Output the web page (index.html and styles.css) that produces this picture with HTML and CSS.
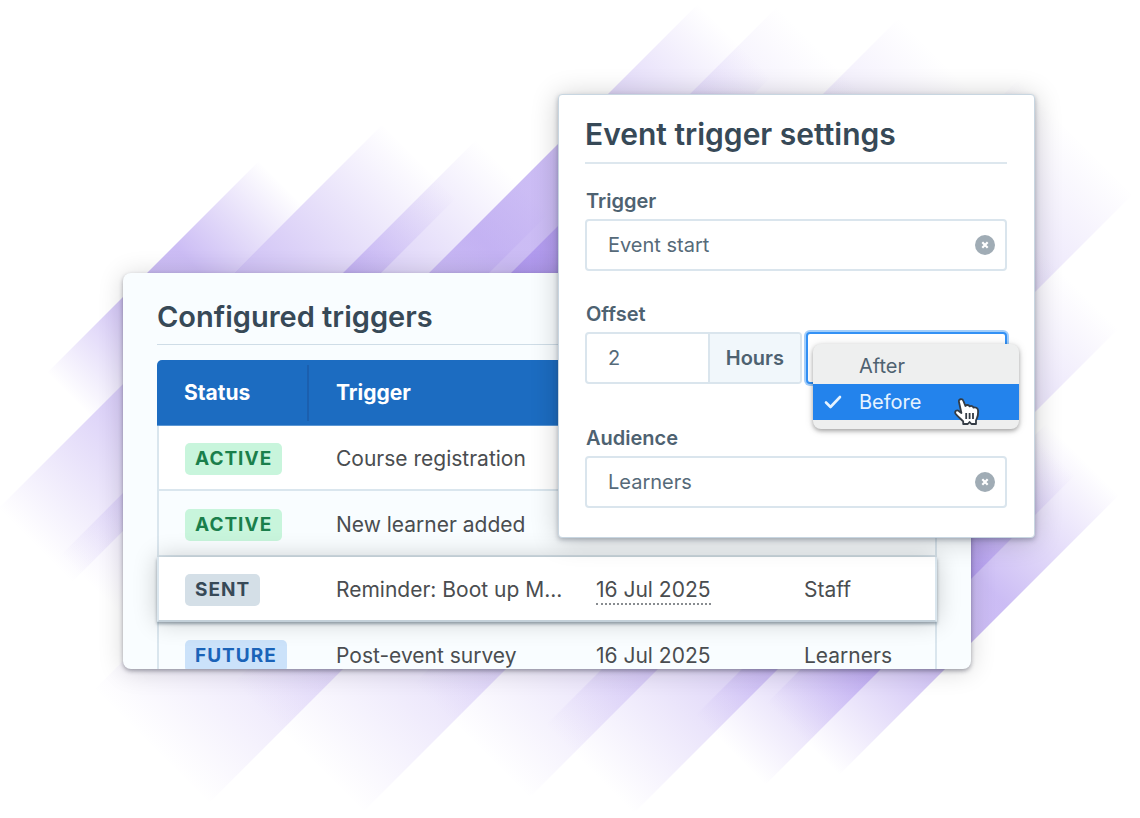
FILE: index.html
```html
<!DOCTYPE html>
<html lang="en">
<head>
    <meta charset="UTF-8">
    <title>Event triggers</title>
    <link rel="stylesheet" href="styles.css">
</head>
<body>
<div id="scene">
    <svg class="beams" viewBox="0 0 1140 818" aria-hidden="true">
        <defs>
            <linearGradient id="fade">
                <stop offset="0" stop-color="#8f6ee8" stop-opacity="0"/>
                <stop offset="0.4" stop-color="#8f6ee8" stop-opacity="0.46"/>
                <stop offset="0.6" stop-color="#8f6ee8" stop-opacity="0.46"/>
                <stop offset="1" stop-color="#8f6ee8" stop-opacity="0"/>
            </linearGradient>
        </defs>
        <!-- x runs along the beams, y across them -->
        <g transform="matrix(.5 -.5 .5 .5 0 0)" fill="url(#fade)">
            <rect x="-326" y="420" width="424" height="87"/>
            <rect x="-510" y="507" width="769" height="147"/>
            <rect x="-494" y="616" width="830" height="146"/>
            <rect x="-60" y="702" width="754" height="146"/>
            <rect x="-596" y="784" width="1367" height="228"/>
            <rect x="-450" y="917" width="1331" height="258"/>
            <rect x="-270" y="1098" width="1210" height="229"/>
            <rect x="-180" y="1271" width="970" height="176"/>
            <rect x="-20" y="1411" width="620" height="139"/>
            <rect x="64" y="1470" width="560" height="144"/>
        </g>
    </svg>

    <section class="panel">
        <h2>Configured triggers</h2>
        <table>
            <colgroup>
                <col class="col-status">
                <col class="col-trigger">
                <col class="col-date">
                <col>
            </colgroup>
            <thead>
            <tr>
                <th>Status</th>
                <th>Trigger</th>
                <th></th>
                <th></th>
            </tr>
            </thead>
            <tbody>
            <tr>
                <td><span class="badge active">ACTIVE</span></td>
                <td>Course registration</td>
                <td></td>
                <td></td>
            </tr>
            <tr>
                <td><span class="badge active">ACTIVE</span></td>
                <td>New learner added</td>
                <td></td>
                <td></td>
            </tr>
            <tr class="raised">
                <td><span class="badge sent">SENT</span></td>
                <td>Reminder: Boot up M...</td>
                <td><span class="dotted">16 Jul 2025</span></td>
                <td>Staff</td>
            </tr>
            <tr>
                <td><span class="badge future">FUTURE</span></td>
                <td>Post-event survey</td>
                <td>16 Jul 2025</td>
                <td>Learners</td>
            </tr>
            </tbody>
        </table>
    </section>

    <form class="dialog">
        <h2>Event trigger settings</h2>

        <label for="trigger">Trigger</label>
        <div class="field">
            <input type="text" id="trigger" value="Event start">
            <button type="button" class="clear" aria-label="Clear trigger">
                <svg viewBox="0 0 20 20"><path d="M7.3 7.3l5.4 5.4M12.7 7.3l-5.4 5.4"/></svg>
            </button>
        </div>

        <label for="offset">Offset</label>
        <div class="offset-row">
            <div class="field">
                <input type="text" id="offset" value="2">
                <span class="unit">Hours</span>
            </div>
            <div class="direction">
                <select aria-label="Before or after">
                    <option>After</option>
                    <option selected>Before</option>
                </select>
                <ul class="menu">
                    <li>After</li>
                    <li class="selected">
                        <svg class="tick" viewBox="0 0 18 14"><path d="M2 7.5l4.5 4.5L16 2"/></svg>
                        Before
                        <svg class="hand" viewBox="0 0 26 28"><path d="M5 4C4.200 .8 8.400 .2 9.400 3L11.400 8C12.400 6.400 14.800 6.800 15.600 8.400C17 7.400 19 8 19.400 9.600C21.400 8.800 23.800 10 24 12.200C24.200 15 24.200 17.500 23 20L22 22.400V26H17.400L15.600 24L13.800 26H9.200V23.400C7 21 3.600 18.600 1.600 15.800C.2 13.200 3 11.400 5 13.200L7.400 15Z"/><path d="M12.200 15v6M15.600 15v6M19 15v6"/></svg>
                    </li>
                </ul>
            </div>
        </div>

        <label for="audience">Audience</label>
        <div class="field">
            <input type="text" id="audience" value="Learners">
            <button type="button" class="clear" aria-label="Clear audience">
                <svg viewBox="0 0 20 20"><path d="M7.3 7.3l5.4 5.4M12.7 7.3l-5.4 5.4"/></svg>
            </button>
        </div>
    </form>
</div>
</body>
</html>
```
FILE: styles.css
```css
* {
    margin: 0;
    padding: 0;
    box-sizing: border-box;
}

body {
    background: #fff;
    color: #4a4d50;
    font: 20px/24px Inter, "Liberation Sans", sans-serif;
}

ul {
    list-style: none;
}

#scene {
    position: relative;
    display: grid;
    grid-template-columns: 123fr 435fr 413fr 64fr 105fr;
    align-items: start;
    min-height: 100vh;
    padding-top: 94px;
    overflow: hidden;
}

.beams {
    position: absolute;
    top: 0;
    left: 0;
    width: 100%;
}

h2 {
    color: #374957;
    font-size: 29px;
    font-weight: 600;
    line-height: 36px;
}

/* triggers table */
.panel {
    position: relative;
    grid-area: 1 / 2 / 2 / 4;
    height: 396px;
    margin-top: 179px;
    padding: 26px 34px 0;
    overflow: hidden;
    background: #f9fdff;
    border-radius: 8px;
    box-shadow: 0 2px 4px rgba(40, 40, 60, .4), 0 2px 26px rgba(0, 0, 0, .16);
}

.panel h2 {
    padding-bottom: 9px;
    border-bottom: 1px solid #cfdde7;
    margin-bottom: 15px;
}

table {
    width: 100%;
    table-layout: fixed;
    border-spacing: 0;
    font-size: 21px;
}

.col-status {
    width: 152px;
}

.col-trigger {
    width: 260px;
}

.col-date {
    width: 208px;
}

th {
    height: 66px;
    padding-left: 27px;
    background: #1c6cc1;
    border-bottom: 1px solid #5c97d4;
    color: #fff;
    font-weight: 700;
    text-align: left;
}

th:first-child {
    border-radius: 5px 0 0 0;
    background: linear-gradient(#1b5fae, #1b5fae) right center / 2px 56px no-repeat #1c6cc1;
}

th:last-child {
    border-radius: 0 5px 0 0;
}

td {
    height: 66px;
    padding: 3px 0 0 27px;
    background: #f9fdff;
    border-bottom: 2px solid #dae6ee;
    white-space: nowrap;
}

tr:first-child td,
.raised td {
    background: #fff;
}

tr:first-child td {
    height: 65px;
}

.raised td {
    height: 65px;
    border-bottom-color: #c3d0d9;
}

td:first-child {
    border-left: 2px solid #dae6ee;
    padding-left: 26px;
}

td:last-child {
    border-right: 2px solid #dae6ee;
}

.raised {
    position: relative;
    box-shadow: 0 2px 3px rgba(60, 80, 95, .5), 0 0 24px rgba(0, 0, 0, .2);
}

.badge {
    display: inline-block;
    padding: 0 10px;
    border-radius: 5px;
    font-size: 19px;
    font-weight: 700;
    line-height: 32px;
    letter-spacing: 1px;
}

.active {
    background: #c8f5dc;
    color: #1a7f4b;
}

.sent {
    background: #d4dfe7;
    color: #374957;
}

.future {
    background: #cbe2fa;
    color: #1a63b8;
}

.dotted {
    padding-bottom: 1px;
    border-bottom: 2px dotted #888c90;
}

/* settings dialog */
.dialog {
    position: relative;
    grid-area: 1 / 3 / 2 / 5;
    padding: 21px 27px 29px 26px;
    background: #fff;
    border: 1px solid #c8d6e1;
    border-radius: 4px;
    box-shadow: 0 2px 5px rgba(50, 60, 80, .35), 0 2px 28px rgba(0, 0, 0, .2);
    color: #4e6271;
}

.dialog h2 {
    padding-bottom: 10px;
    border-bottom: 2px solid #dde7ee;
    margin-bottom: 25px;
    font-size: 30px;
}

label {
    display: block;
    height: 30px;
    padding-left: 1px;
    font-weight: 600;
}

.field {
    display: flex;
    align-items: center;
    height: 52px;
    margin-bottom: 31px;
    overflow: hidden;
    background: #fff;
    border: 2px solid #dae5ed;
    border-radius: 4px;
}

.field:last-child {
    margin-bottom: 0;
}

input {
    flex: 1;
    min-width: 0;
    padding-left: 21px;
    border: 0;
    outline: 0;
    background: none;
    color: #566a79;
    font: inherit;
}

.clear {
    width: 20px;
    height: 20px;
    margin-right: 10px;
    border: 0;
    border-radius: 50%;
    background: #a0acb5;
}

.clear svg {
    display: block;
    fill: none;
    stroke: #fff;
    stroke-width: 2.2;
}

.offset-row {
    display: flex;
    gap: 4px;
    margin-bottom: 42px;
}

.offset-row .field {
    flex: 1;
    margin: 0;
}

.unit {
    padding: 0 16px;
    background: #f1f7fb;
    border-left: 2px solid #dae5ed;
    font-weight: 600;
    line-height: 48px;
}

.direction {
    position: relative;
    width: 201px;
}

select {
    width: 100%;
    height: 52px;
    padding-left: 22px;
    appearance: none;
    background: #fff;
    border: 2px solid #3391f5;
    border-radius: 4px;
    box-shadow: 0 0 0 2px #a3cefa;
    color: #566a79;
    font: inherit;
}

.menu {
    position: absolute;
    top: 12px;
    left: 7px;
    width: 206px;
    padding: 4px 0 9px;
    background: #eeefef;
    border-radius: 8px;
    box-shadow: 0 2px 4px rgba(0, 0, 0, .3), 0 1px 10px rgba(0, 0, 0, .12);
}

.menu li {
    padding-left: 46px;
    line-height: 36px;
}

.menu .selected {
    position: relative;
    background: #2383ec;
    color: #e6f3ff;
}

.tick {
    position: absolute;
    top: 11px;
    left: 11px;
    width: 18px;
    fill: none;
    stroke: #e6f3ff;
    stroke-width: 2.6;
    stroke-linecap: round;
    stroke-linejoin: round;
}

.hand {
    position: absolute;
    top: 14px;
    right: 39px;
    width: 26px;
    fill: #fff;
    stroke: #333b44;
    stroke-width: 1.8;
    stroke-linejoin: round;
}
```
